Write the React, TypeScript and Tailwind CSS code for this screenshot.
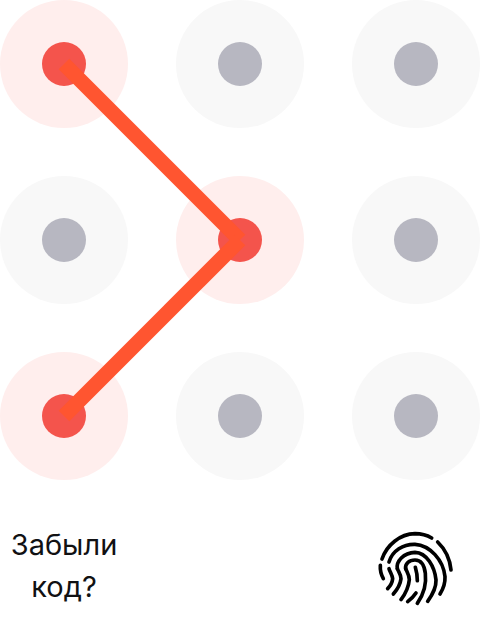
import React from 'react';

const dots = [true, false, false, false, true, false, true, false, false];

const Dot: React.FC<{ active: boolean }> = ({ active }) => (
  <div
    className={`flex h-32 w-32 items-center justify-center rounded-full ${active ? 'bg-[#ffeeed]' : 'bg-[#f8f8f8]'}`}
  >
    <div className={`h-11 w-11 rounded-full ${active ? 'bg-[#f4544c]' : 'bg-[#b7b7c1]'}`} />
  </div>
);

const Fingerprint: React.FC = () => (
  <svg width="100" height="90" viewBox="0 0 300 270" fill="none" stroke="#000" strokeWidth="11" strokeLinecap="round">
    <path d="M66 117C80 75 120 42 165 41C183 41 200 45 215 54" />
    <path d="M233 66C256 88 270 118 273 150" />
    <path d="M61 136C60 150 63 163 70 176" />
    <path d="M87 126C97 92 130 72 165 73C210 76 250 120 255 170C256 190 250 206 240 222" />
    <path d="M87 146C90 156 97 165 98 176C97 188 91 198 83 206" />
    <path d="M112 146C108 125 130 98 165 97C200 98 224 140 228 180C229 205 216 226 203 244" />
    <path d="M112 146C116 156 123 164 123 176C121 193 112 208 100 222" />
    <path d="M137 146C135 130 148 120 165 120C182 120 193 135 196 160C200 195 190 225 172 250" />
    <path d="M137 146C141 156 148 166 148 179C146 200 136 222 123 239" />
    <path d="M166 142C170 155 172 168 172 182" />
    <path d="M168 219C162 228 153 237 143 245" />
  </svg>
);

export default function App() {
  return (
    <div className="relative h-[632px] w-[480px] bg-white font-['Inter',sans-serif]">
      <div className="grid grid-cols-[128px_128px_128px] justify-between gap-y-12">
        {dots.map((active, i) => (
          <Dot key={i} active={active} />
        ))}
      </div>
      <svg className="absolute left-0 top-0" width="480" height="480" fill="none" stroke="#ff5530" strokeWidth="15">
        <path d="M64 64L240 240" />
        <path d="M240 240L64 416" />
      </svg>
      <div className="flex items-start justify-between pt-10">
        <div className="mt-1 w-32 text-center text-[29px] leading-[42px] text-[#111113]">Забыли код?</div>
        <div className="mr-5">
          <Fingerprint />
        </div>
      </div>
    </div>
  );
}
